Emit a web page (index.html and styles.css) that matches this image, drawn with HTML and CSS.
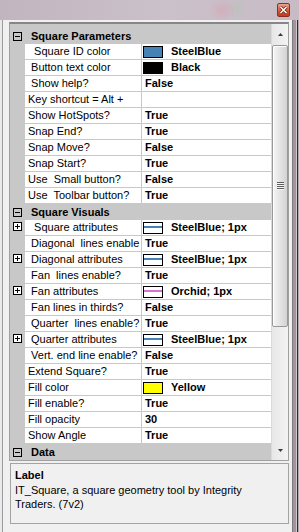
FILE: index.html
```html
<!DOCTYPE html>
<html lang="en">
<head>
    <meta charset="UTF-8">
    <meta name="viewport" content="width=device-width, initial-scale=1.0">
    <title>IT_Square properties</title>

    <link rel="stylesheet" href="styles.css">

</head>
<body>
    <div class="titlebar">
        <div class="close">
            <svg width="9" height="8" viewBox="0 0 9 8">
                <path d="M1.5 1l6 6M7.5 1l-6 6" stroke="#6a2416" stroke-width="3"/>
                <path d="M1.5 1l6 6M7.5 1l-6 6" stroke="#fff" stroke-width="1.5"/>
            </svg>
        </div>
    </div>

    <div class="frame">
        <div class="edge-left"></div>

        <div class="window">
            <div class="grid">
                <div class="props">
                    <div class="category">
                        <svg class="toggle" width="9" height="9" viewBox="0 0 9 9"><rect x="0.5" y="0.5" width="8" height="8" fill="none" stroke="#000"/><path d="M2 4.5h5" stroke="#000"/></svg>
                        <span>Square Parameters</span>
                    </div>
                    <div class="row"><span class="gutter"></span><span class="name">  Square ID color</span><span class="value"><i class="swatch steelblue"></i>SteelBlue</span></div>
                    <div class="row"><span class="gutter"></span><span class="name"> Button text color</span><span class="value"><i class="swatch black"></i>Black</span></div>
                    <div class="row"><span class="gutter"></span><span class="name"> Show help?</span><span class="value">False</span></div>
                    <div class="row"><span class="gutter"></span><span class="name">Key shortcut = Alt +</span><span class="value"></span></div>
                    <div class="row"><span class="gutter"></span><span class="name">Show HotSpots?</span><span class="value">True</span></div>
                    <div class="row"><span class="gutter"></span><span class="name">Snap End?</span><span class="value">True</span></div>
                    <div class="row"><span class="gutter"></span><span class="name">Snap Move?</span><span class="value">False</span></div>
                    <div class="row"><span class="gutter"></span><span class="name">Snap Start?</span><span class="value">True</span></div>
                    <div class="row"><span class="gutter"></span><span class="name">Use  Small button?</span><span class="value">False</span></div>
                    <div class="row"><span class="gutter"></span><span class="name">Use  Toolbar button?</span><span class="value">True</span></div>

                    <div class="category">
                        <svg class="toggle" width="9" height="9" viewBox="0 0 9 9"><rect x="0.5" y="0.5" width="8" height="8" fill="none" stroke="#000"/><path d="M2 4.5h5" stroke="#000"/></svg>
                        <span>Square Visuals</span>
                    </div>
                    <div class="row"><span class="gutter"><svg class="expand" width="9" height="9" viewBox="0 0 9 9"><rect x="0.5" y="0.5" width="8" height="8" fill="#fff" stroke="#000"/><path d="M2 4.5h5M4.5 2v5" stroke="#000"/></svg></span><span class="name">  Square attributes</span><span class="value"><i class="pen steelblue"></i>SteelBlue; 1px</span></div>
                    <div class="row"><span class="gutter"></span><span class="name"> Diagonal  lines enable</span><span class="value">True</span></div>
                    <div class="row"><span class="gutter"><svg class="expand" width="9" height="9" viewBox="0 0 9 9"><rect x="0.5" y="0.5" width="8" height="8" fill="#fff" stroke="#000"/><path d="M2 4.5h5M4.5 2v5" stroke="#000"/></svg></span><span class="name"> Diagonal attributes</span><span class="value"><i class="pen steelblue"></i>SteelBlue; 1px</span></div>
                    <div class="row"><span class="gutter"></span><span class="name"> Fan  lines enable?</span><span class="value">True</span></div>
                    <div class="row"><span class="gutter"><svg class="expand" width="9" height="9" viewBox="0 0 9 9"><rect x="0.5" y="0.5" width="8" height="8" fill="#fff" stroke="#000"/><path d="M2 4.5h5M4.5 2v5" stroke="#000"/></svg></span><span class="name"> Fan attributes</span><span class="value"><i class="pen orchid"></i>Orchid; 1px</span></div>
                    <div class="row"><span class="gutter"></span><span class="name"> Fan lines in thirds?</span><span class="value">False</span></div>
                    <div class="row"><span class="gutter"></span><span class="name"> Quarter  lines enable?</span><span class="value">True</span></div>
                    <div class="row"><span class="gutter"><svg class="expand" width="9" height="9" viewBox="0 0 9 9"><rect x="0.5" y="0.5" width="8" height="8" fill="#fff" stroke="#000"/><path d="M2 4.5h5M4.5 2v5" stroke="#000"/></svg></span><span class="name"> Quarter attributes</span><span class="value"><i class="pen steelblue"></i>SteelBlue; 1px</span></div>
                    <div class="row"><span class="gutter"></span><span class="name"> Vert. end line enable?</span><span class="value">False</span></div>
                    <div class="row"><span class="gutter"></span><span class="name">Extend Square?</span><span class="value">True</span></div>
                    <div class="row"><span class="gutter"></span><span class="name">Fill color</span><span class="value"><i class="swatch yellow"></i>Yellow</span></div>
                    <div class="row"><span class="gutter"></span><span class="name">Fill enable?</span><span class="value">True</span></div>
                    <div class="row"><span class="gutter"></span><span class="name">Fill opacity</span><span class="value">30</span></div>
                    <div class="row"><span class="gutter"></span><span class="name">Show Angle</span><span class="value">True</span></div>

                    <div class="category">
                        <svg class="toggle" width="9" height="9" viewBox="0 0 9 9"><rect x="0.5" y="0.5" width="8" height="8" fill="none" stroke="#000"/><path d="M2 4.5h5" stroke="#000"/></svg>
                        <span>Data</span>
                    </div>
                </div>

                <div class="scrollbar">
                    <div class="arrow"><svg width="5" height="3" viewBox="0 0 5 3"><path d="M0 3h5L2.5 0z" fill="#3c3c3c"/></svg></div>
                    <div class="thumb"><span class="grip"></span></div>
                    <div class="track"></div>
                    <div class="arrow"><svg width="5" height="3" viewBox="0 0 5 3"><path d="M0 0h5L2.5 3z" fill="#3c3c3c"/></svg></div>
                </div>
            </div>

            <div class="help">
                <div class="help-title">Label</div>
                <div class="help-text">IT_Square, a square geometry tool by Integrity<br>Traders. (7v2)</div>
            </div>
        </div>

        <div class="edge-right"></div>
    </div>
</body>
</html>
```

FILE: styles.css
```css
* {
    margin: 0;
    padding: 0;
    box-sizing: border-box;
}

body {
    width: 299px;
    height: 532px;
    overflow: hidden;
    background:
        radial-gradient(ellipse 14px 12px at 222px 10px, rgba(220, 150, 160, 0.35), transparent),
        radial-gradient(ellipse 10px 12px at 238px 8px, rgba(170, 200, 170, 0.35), transparent),
        linear-gradient(to right, #c1b5bf, #cbc1ca 55%, #c8bbc6);
    font-family: "Liberation Sans", Arial, sans-serif;
    font-size: 11px;
    color: #000;
}

.titlebar {
    height: 20px;
    display: flex;
    justify-content: flex-end;
    padding: 3px 9px 0 0;
}

.close {
    width: 13px;
    height: 14px;
    border: 1px solid #8a2f22;
    border-radius: 2px;
    background: linear-gradient(#eba592, #d9613f 50%, #c23a1c);
    display: flex;
    align-items: center;
    justify-content: center;
}

.frame {
    display: flex;
    height: 512px;
}

.edge-left {
    width: 2px;
    background: #ece7eb;
}

.window {
    width: 291px;
    background: #f0f0f0;
    border-left: 1px solid #9c9c9c;
    border-right: 1px solid #7c7c7c;
    padding: 2px 3px 0 6px;
}

.edge-right {
    width: 6px;
    background: linear-gradient(to right, #a5929f 0 3px, #d2c9cf 3px 4px, #2c2c2c 4px 5px, #b6a9b3 5px);
}

/* property grid */

.grid {
    display: flex;
    height: 439px;
    border: 1px solid #a0a0a0;
    border-top: 2px solid #878787;
    background: #c8c8c8;
}

.props {
    width: 261px;
    padding-top: 4px;
}

.category {
    display: flex;
    height: 16px;
    line-height: 16px;
    font-weight: bold;
}

.toggle {
    margin: 4px 9px 0 3px;
    flex: none;
}

.row {
    display: flex;
    height: 16px;
    line-height: 15px;
}

.gutter {
    width: 15px;
    flex: none;
    padding: 2px 0 0 3px;
}

.expand {
    display: block;
}

.name {
    width: 117px;
    flex: none;
    background: #fff;
    border-right: 1px solid #c8c8c8;
    border-bottom: 1px solid #c8c8c8;
    padding-left: 3px;
    white-space: pre;
    overflow: hidden;
}

.value {
    flex: 1;
    display: flex;
    background: #fff;
    border-bottom: 1px solid #c8c8c8;
    padding-left: 3px;
    font-weight: bold;
    white-space: pre;
    overflow: hidden;
}

.swatch,
.pen {
    flex: none;
    width: 20px;
    height: 12px;
    margin: 2px 8px 0 -2px;
    border: 1px solid #000;
}

.swatch.steelblue { background: #4682b4; }
.swatch.black { background: #000; }
.swatch.yellow { background: #ffff00; }

.pen { background: #fff; }
.pen.steelblue { background: linear-gradient(#fff 3px, #4682b4 3px 5px, #fff 5px); }
.pen.orchid { background: linear-gradient(#fff 3px, #da70d6 3px 5px, #fff 5px); }

/* scrollbar */

.scrollbar {
    width: 17px;
    flex: none;
    display: flex;
    flex-direction: column;
    border-left: 1px solid #dadada;
    background: linear-gradient(to right, #e7e7e7, #f3f3f3);
}

.arrow {
    height: 20px;
    flex: none;
    display: flex;
    align-items: center;
    justify-content: center;
}

.thumb {
    height: 282px;
    flex: none;
    margin-top: 1px;
    border: 1px solid #999;
    border-radius: 2px;
    background: linear-gradient(to right, #f5f5f5, #e4e4e4 50%, #d3d3d3);
    box-shadow: inset 1px 1px 0 #fff;
    display: flex;
    align-items: center;
    justify-content: center;
}

.grip {
    width: 7px;
    height: 8px;
    background: repeating-linear-gradient(#5e5e5e 0 1px, #f6f6f6 1px 2px);
}

.track {
    flex: 1;
}

/* description pane */

.help {
    margin: 2px 0 0 1px;
    height: 61px;
    border: 1px solid #a3a3a3;
    padding: 4px 4px 0;
    background: #f0f0f0;
    line-height: 14px;
}

.help-title {
    font-weight: bold;
}

.help-text {
    margin-top: 1px;
}
```
